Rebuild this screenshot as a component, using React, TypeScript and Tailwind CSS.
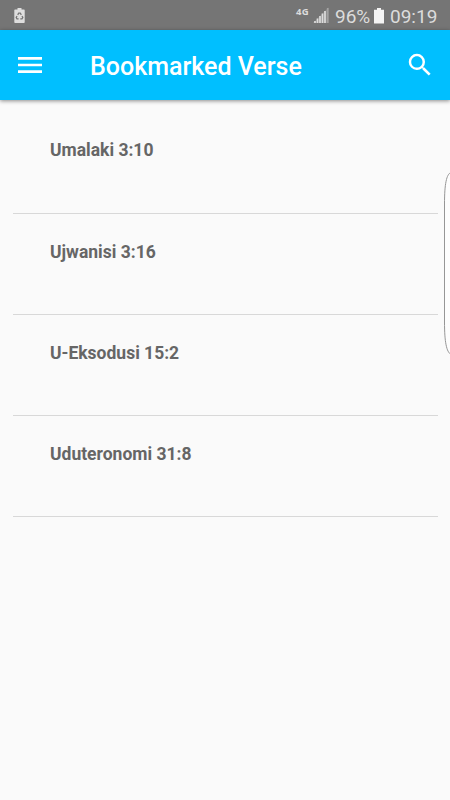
const verses = ['Umalaki 3:10', 'Ujwanisi 3:16', 'U-Eksodusi 15:2', 'Uduteronomi 31:8'];

function StatusBar() {
  return (
    <div className="flex h-[30px] items-center bg-[#757575] pr-[13px] pl-[13.5px] text-[#dcdcdc]">
      <svg className="h-[15px] w-[11px]" viewBox="0 0 11 15" aria-hidden>
        <path d="M3.5 0h4v1.5H10a.7.7 0 0 1 .7.7v12a.8.8 0 0 1-.8.8H1.1a.8.8 0 0 1-.8-.8v-12a.7.7 0 0 1 .7-.7h2.5z" fill="#dedede" />
        <path
          d="M3.7 6.9L4.7 5.2h1.6l1 1.6M8 8l.8 1.5-.8 1.4H6.3M4.6 10.9H3L2.2 9.5 3 8"
          fill="none"
          stroke="#757575"
          strokeWidth="1.3"
        />
      </svg>
      <span className="mt-[-6px] ml-auto text-[9.5px] leading-none font-bold tracking-[0.4px] font-['Open_Sans',sans-serif]">4G</span>
      <svg className="ml-[4px] h-[16px] w-[16px]" viewBox="0 0 16 16" aria-hidden>
        <path d="M0 16L15.5 0.5V16z" fill="#8c8c8c" />
        <path d="M2 16v-2M4.5 16v-4.500M7 16V9M9.500 16V6.500M12 16V4" stroke="#dcdcdc" strokeWidth="1.700" />
        <path d="M14.700 16V1" stroke="#a3a3a3" strokeWidth="1.700" />
      </svg>
      <span className="mt-[2px] ml-[6px] w-[35px] text-[19px] leading-none whitespace-nowrap">96%</span>
      <svg className="mt-[1px] ml-[4px] h-[16px] w-[10px]" viewBox="0 0 10 16" aria-hidden>
        <path d="M3 0h4v1.7h3V15.5H0V1.7h3z" fill="#f4f4f4" />
      </svg>
      <span className="mt-[2px] ml-[6px] w-[47px] text-[19px] leading-none whitespace-nowrap">09:19</span>
    </div>
  );
}

function AppBar() {
  return (
    <header className="flex h-[70px] items-center bg-[#00bfff] pr-[15px] pl-[14px] text-white shadow-[0_1px_4px_rgba(0,0,0,0.45)]">
      <button type="button" aria-label="Menu">
        <svg className="h-8 w-8" viewBox="0 0 24 24" fill="currentColor">
          <path d="M3 18h18v-2H3v2zm0-5h18v-2H3v2zm0-7v2h18V6H3z" />
        </svg>
      </button>
      <h1 className="mt-[2px] ml-[44px] text-[25px] leading-none font-medium">Bookmarked Verse</h1>
      <button type="button" aria-label="Search" className="ml-auto">
        <svg className="h-[30px] w-[30px]" viewBox="0 0 24 24" fill="currentColor">
          <path d="M15.5 14h-.79l-.28-.27A6.471 6.471 0 0 0 16 9.5 6.5 6.5 0 1 0 9.5 16c1.61 0 3.09-.59 4.23-1.57l.27.28v.79l5 4.99L20.49 19l-4.99-5zm-6 0C7.01 14 5 11.99 5 9.5S7.01 5 9.5 5 14 7.01 14 9.5 11.99 14 9.5 14z" />
        </svg>
      </button>
    </header>
  );
}

export default function App() {
  return (
    <div className="relative h-[800px] w-[450px] overflow-hidden bg-[#fafafa] font-[Roboto,sans-serif]">
      <StatusBar />
      <AppBar />
      <ul className="mx-[12.5px] mt-[12.4px]">
        {verses.map((verse) => (
          <li key={verse} className="h-[101.25px] border-b border-[#d8d8d8] pt-[28px] pl-[37.5px]">
            <span className="block text-[17.5px] leading-5 font-bold text-[#666]">{verse}</span>
          </li>
        ))}
      </ul>

      {/* edge panel handle, half off screen */}
      <svg className="absolute top-[170px] right-0 h-[188px] w-[7px]" viewBox="0 0 7 188" aria-hidden>
        <path
          d="M8 2.5C3.5 4 1.5 14 1.5 34V152C1.5 172 3.5 182 8 184.5"
          fill="#fdfdfd"
          stroke="#969696"
          strokeWidth="1"
        />
      </svg>
    </div>
  );
}
